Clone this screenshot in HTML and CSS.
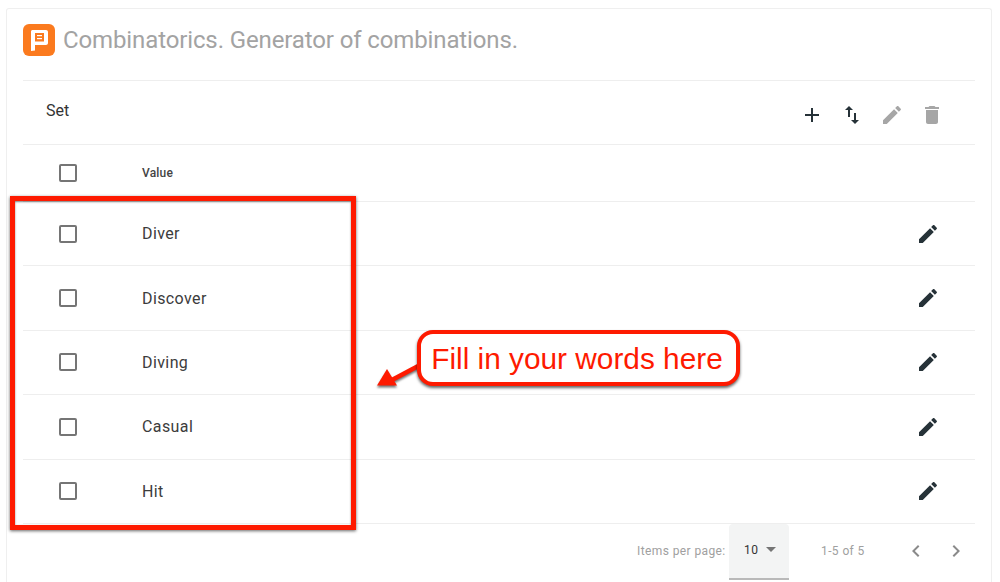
FILE: index.html
```html
<!DOCTYPE html>
<html lang="en">
<head>
  <meta charset="utf-8" />
  <link rel="stylesheet" href="styles.css">
  <title>Combinatorics. Generator of combinations.</title>
</head>
<body>
  <div class="card">
    <div class="title-row">
      <svg class="logo" width="32" height="32" viewBox="0 0 32 32">
        <rect width="32" height="32" rx="6" fill="#fb7a1e"/>
        <path d="M8 27V7.500C8 6.700 8.700 6 9.500 6H23c1.100 0 2 .9 2 2v11c0 1.100-.9 2-2 2H12v5.500z" fill="#fff"/>
        <rect x="12" y="9" width="9" height="8.500" fill="#fb7a1e"/>
        <rect x="14" y="11" width="5" height="1.200" fill="#fff"/>
        <rect x="14" y="14" width="5" height="1.200" fill="#fff"/>
      </svg>
      <h1>Combinatorics. Generator of combinations.</h1>
    </div>

    <div class="toolbar">
      <span class="toolbar-name">Set</span>
      <div class="toolbar-icons">
        <span class="icon-btn"><svg width="24" height="24" viewBox="0 0 24 24"><path d="M19 13h-6v6h-2v-6H5v-2h6V5h2v6h6v2z"/></svg></span>
        <span class="icon-btn"><svg width="24" height="24" viewBox="0 0 24 24"><path d="M16 17.010V10h-2v7.010h-3L15 21l4-3.990h-3zM9 3L5 6.990h3V14h2V6.990h3L9 3z"/></svg></span>
        <span class="icon-btn off"><svg width="24" height="24" viewBox="0 0 24 24"><path d="M3 17.250V21h3.750L17.810 9.940l-3.750-3.750L3 17.250zM20.710 7.040c.39-.39.39-1.020 0-1.410l-2.340-2.340c-.39-.39-1.020-.39-1.410 0l-1.830 1.830 3.750 3.750 1.830-1.830z"/></svg></span>
        <span class="icon-btn off"><svg width="24" height="24" viewBox="0 0 24 24"><path d="M6 19c0 1.100.9 2 2 2h8c1.100 0 2-.9 2-2V7H6v12zM19 4h-3.500l-1-1h-5l-1 1H5v2h14V4z"/></svg></span>
      </div>
    </div>

    <div class="table-head">
      <span class="check"></span>
      <span class="head-label">Value</span>
    </div>

    <div class="table-row">
      <span class="check"></span>
      <span class="cell">Diver</span>
      <svg class="row-edit" width="24" height="24" viewBox="0 0 24 24"><path d="M3 17.250V21h3.750L17.810 9.940l-3.750-3.750L3 17.250zM20.710 7.040c.39-.39.39-1.020 0-1.410l-2.340-2.340c-.39-.39-1.020-.39-1.410 0l-1.830 1.830 3.750 3.750 1.830-1.830z"/></svg>
    </div>
    <div class="table-row">
      <span class="check"></span>
      <span class="cell">Discover</span>
      <svg class="row-edit" width="24" height="24" viewBox="0 0 24 24"><path d="M3 17.250V21h3.750L17.810 9.940l-3.750-3.750L3 17.250zM20.710 7.040c.39-.39.39-1.020 0-1.410l-2.340-2.340c-.39-.39-1.020-.39-1.410 0l-1.830 1.830 3.750 3.750 1.830-1.830z"/></svg>
    </div>
    <div class="table-row">
      <span class="check"></span>
      <span class="cell">Diving</span>
      <svg class="row-edit" width="24" height="24" viewBox="0 0 24 24"><path d="M3 17.250V21h3.750L17.810 9.940l-3.750-3.750L3 17.250zM20.710 7.040c.39-.39.39-1.020 0-1.410l-2.340-2.340c-.39-.39-1.020-.39-1.410 0l-1.830 1.830 3.750 3.750 1.830-1.830z"/></svg>
    </div>
    <div class="table-row">
      <span class="check"></span>
      <span class="cell">Casual</span>
      <svg class="row-edit" width="24" height="24" viewBox="0 0 24 24"><path d="M3 17.250V21h3.750L17.810 9.940l-3.750-3.750L3 17.250zM20.710 7.040c.39-.39.39-1.020 0-1.410l-2.340-2.340c-.39-.39-1.020-.39-1.410 0l-1.830 1.830 3.750 3.750 1.830-1.830z"/></svg>
    </div>
    <div class="table-row">
      <span class="check"></span>
      <span class="cell">Hit</span>
      <svg class="row-edit" width="24" height="24" viewBox="0 0 24 24"><path d="M3 17.250V21h3.750L17.810 9.940l-3.750-3.750L3 17.250zM20.710 7.040c.39-.39.39-1.020 0-1.410l-2.340-2.340c-.39-.39-1.020-.39-1.410 0l-1.830 1.830 3.750 3.750 1.830-1.830z"/></svg>
    </div>

    <div class="pager">
      <span class="pager-label">Items per page:</span>
      <div class="pager-select">
        <span>10</span>
        <span class="caret"></span>
      </div>
      <span class="pager-range">1-5 of 5</span>
      <div class="pager-nav">
        <svg width="24" height="24" viewBox="0 0 24 24"><path d="M15.410 7.410L14 6l-6 6 6 6 1.410-1.410L10.830 12z"/></svg>
        <svg width="24" height="24" viewBox="0 0 24 24"><path d="M10 6L8.590 7.410 13.170 12l-4.580 4.590L10 18l6-6z"/></svg>
      </div>
    </div>
  </div>

  <!-- annotation layer -->
  <div class="note-frame"></div>
  <svg class="note-arrow" width="60" height="50" viewBox="0 0 60 50">
    <path d="M46 14L14 31" stroke="#fe1a00" stroke-width="4.500" fill="none"/>
    <path d="M1 35.500L11 19L21 35.500z" fill="#fe1a00"/>
  </svg>
  <div class="note-bubble">Fill in your words here</div>
</body>
</html>
```

FILE: styles.css
```css
html, body {
  margin: 0;
  height: 100%;
  overflow: hidden;
  background: #fff;
}
body {
  position: relative;
  font-family: Roboto, sans-serif;
  color: #333;
}
.card {
  margin: 8px 8px 0 6px;
  padding: 0 16px;
  height: 574px;
  box-sizing: border-box;
  border: 1px solid #efefef;
  border-bottom: none;
  border-radius: 3px 3px 0 0;
}
.title-row {
  display: flex;
  align-items: center;
  gap: 8px;
  height: 72px;
  padding-bottom: 9px;
  box-sizing: border-box;
  border-bottom: 1px solid #eeeeee;
}
.logo {
  flex: none;
}
.title-row h1 {
  margin: 0;
  font-size: 24px;
  font-weight: 400;
  color: #a3a3a3;
  letter-spacing: -0.12px;
}
.toolbar {
  display: flex;
  justify-content: space-between;
  height: 64px;
  box-sizing: border-box;
  padding: 0 23px;
  border-bottom: 1px solid #eeeeee;
}
.toolbar-name {
  margin-top: 20px;
  font-size: 16px;
  line-height: 19px;
  color: #333;
}
.toolbar-icons {
  display: flex;
  margin-top: 14px;
}
.icon-btn {
  display: flex;
  justify-content: center;
  align-items: center;
  width: 40px;
  height: 40px;
  fill: #263238;
}
.icon-btn.off {
  fill: #a6a6a6;
}
.table-head, .table-row {
  display: flex;
  align-items: center;
  box-sizing: border-box;
  border-bottom: 1px solid #eeeeee;
  padding-left: 36px;
}
.table-head {
  height: 57px;
}
.table-row {
  height: 64.400px;
}
.check {
  flex: none;
  width: 18px;
  height: 18px;
  box-sizing: border-box;
  border: 2px solid #757575;
  border-radius: 2px;
  margin-right: 65px;
}
.head-label {
  font-size: 12px;
  font-weight: 500;
  letter-spacing: 0.2px;
  color: #444;
}
.cell {
  flex: 1;
  font-size: 16px;
  letter-spacing: 0.4px;
  color: #3c3c3c;
}
.row-edit {
  flex: none;
  margin-right: 35px;
  fill: #263238;
}
.pager {
  display: flex;
  align-items: flex-start;
  height: 56px;
  padding-left: 614px;
  font-size: 12px;
  color: #a0a0a0;
  letter-spacing: 0.4px;
}
.pager-label {
  width: 92px;
  flex: none;
  line-height: 54px;
}
.pager-select {
  display: flex;
  align-items: center;
  flex: none;
  width: 60px;
  height: 56px;
  box-sizing: border-box;
  padding: 0 14px 2px 15px;
  background: #f3f4f4;
  border-bottom: 2px solid #b9b9b9;
  border-radius: 4px 4px 0 0;
  color: #333;
}
.caret {
  margin-left: 8px;
  border-left: 5px solid transparent;
  border-right: 5px solid transparent;
  border-top: 5px solid #757575;
}
.pager-range {
  margin-left: 32px;
  flex: none;
  line-height: 54px;
}
.pager-nav {
  display: flex;
  gap: 16px;
  margin: 15px 0 0 39px;
  fill: #8a8a8a;
}

/* annotations drawn on top of the screenshot */
.note-frame {
  position: absolute;
  left: 10px;
  top: 196px;
  width: 346px;
  height: 334px;
  box-sizing: border-box;
  border: 5px solid #fe1a00;
  box-shadow: 0 1px 3px rgba(0,0,0,0.6), inset 0 1px 2px rgba(0,0,0,0.5);
}
.note-arrow {
  position: absolute;
  left: 376px;
  top: 350px;
  filter: drop-shadow(0 2px 1px rgba(0,0,0,0.55));
}
.note-bubble {
  position: absolute;
  left: 417px;
  top: 330px;
  width: 323px;
  height: 56px;
  box-sizing: border-box;
  padding-right: 3px;
  border: 4px solid #fe1a00;
  border-radius: 16px;
  background: #fff;
  box-shadow: 0 2px 3px rgba(0,0,0,0.6);
  font-family: "Liberation Sans", Arial, sans-serif;
  font-size: 29.800px;
  line-height: 50px;
  text-align: center;
  color: #fe1a00;
  white-space: nowrap;
}
```
